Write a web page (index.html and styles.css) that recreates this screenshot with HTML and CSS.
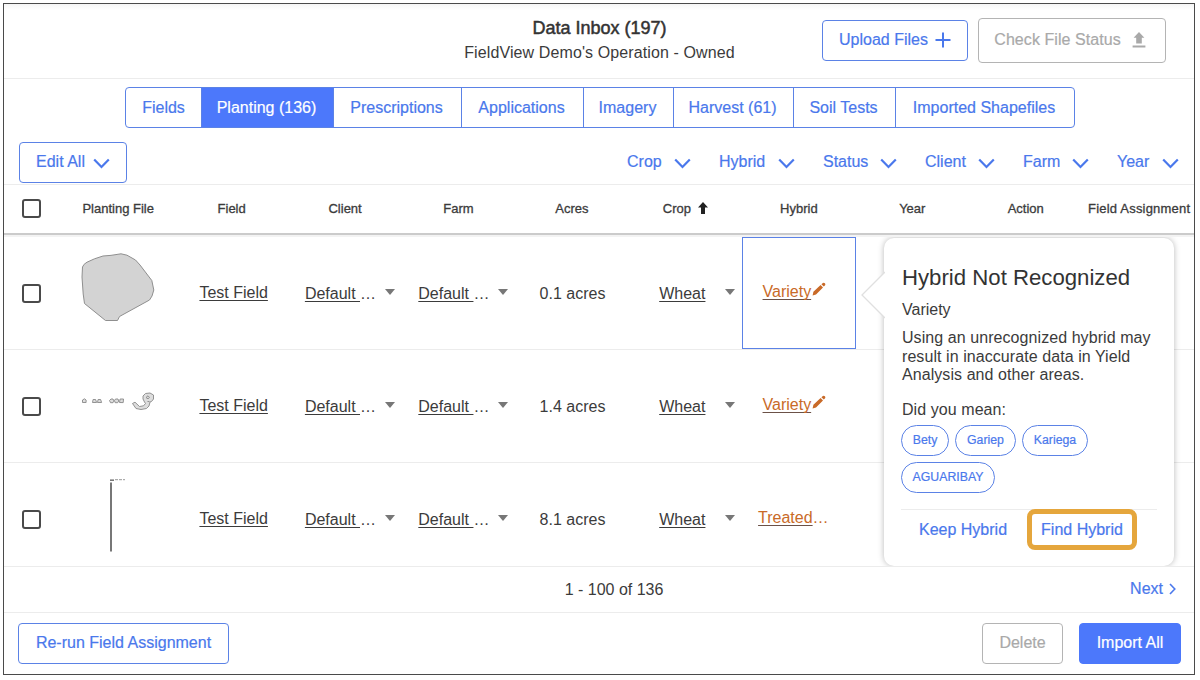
FILE: index.html
```html
<!DOCTYPE html>
<html lang="en">
<head>
<meta charset="utf-8">
<title>Data Inbox</title>
<link rel="stylesheet" href="styles.css">
</head>
<body>
<svg class="defs" width="0" height="0">
  <symbol id="chev" viewBox="0 0 17 11"><path d="M1.2 1.5 8.5 9 15.8 1.5" fill="none" stroke="currentColor" stroke-width="2.2"/></symbol>
  <symbol id="pencil" viewBox="0 0 14 14"><path d="M0.6 13.400 1.400 9.800 8.600 3 11 5.400 4 12.500ZM9.400 2.300 10.900 .9Q11.900 .3 12.900 1.200 13.800 2.200 13.100 3.200L11.800 4.600Z" fill="currentColor"/></symbol>
</svg>
<div class="app">
  <header class="top">
    <div></div>
    <div class="titles">
      <h1 class="title">Data Inbox (197)</h1>
      <p class="subtitle">FieldView Demo's Operation - Owned</p>
    </div>
    <div class="top-actions">
      <button class="btn upload"><span class="t-upload">Upload Files</span><svg width="16" height="16" viewBox="0 0 16 16"><path d="M8 0.5V15.5M0.5 8H15.5" stroke="currentColor" stroke-width="2"/></svg></button>
      <button class="btn muted check"><span class="t-check">Check File Status</span><svg width="14" height="16" viewBox="0 0 14 16"><path d="M7 0 12.4 5.8H9.8V11.6H4.2V5.8H1.6ZM0.6 13.6H13.4V15.4H0.6Z" fill="currentColor"/></svg></button>
    </div>
  </header>
  <nav class="tabs">
    <a class="tab">Fields</a><a class="tab active">Planting (136)</a><a class="tab">Prescriptions</a><a class="tab">Applications</a><a class="tab">Imagery</a><a class="tab">Harvest (61)</a><a class="tab">Soil Tests</a><a class="tab">Imported Shapefiles</a>
  </nav>
  <div class="toolbar">
    <button class="btn edit"><span>Edit All</span><svg width="17" height="11"><use href="#chev"/></svg></button>
    <div class="filters">
      <a class="filter">Crop<svg width="17" height="11"><use href="#chev"/></svg></a>
      <a class="filter">Hybrid<svg width="17" height="11"><use href="#chev"/></svg></a>
      <a class="filter">Status<svg width="17" height="11"><use href="#chev"/></svg></a>
      <a class="filter">Client<svg width="17" height="11"><use href="#chev"/></svg></a>
      <a class="filter">Farm<svg width="17" height="11"><use href="#chev"/></svg></a>
      <a class="filter">Year<svg width="17" height="11"><use href="#chev"/></svg></a>
    </div>
  </div>
  <div class="row head">
    <div class="cell first"><i class="box"></i></div>
    <div class="cell">Planting File</div>
    <div class="cell">Field</div>
    <div class="cell">Client</div>
    <div class="cell">Farm</div>
    <div class="cell">Acres</div>
    <div class="cell sorted">Crop<svg width="10" height="12" viewBox="0 0 10 12"><path d="M5 0 10 5.4H7V12H3V5.4H0Z" fill="currentColor"/></svg></div>
    <div class="cell">Hybrid</div>
    <div class="cell">Year</div>
    <div class="cell">Action</div>
    <div class="cell wide">Field Assignment</div>
  </div>
  <div class="body">
    <div class="row">
      <div class="cell first"><i class="box"></i></div>
      <div class="cell thumb"><svg width="76" height="76" viewBox="80 252 76 76"><path d="M82.5 267Q83.5 264 87 262.2 94 258.5 103 256 110 255.8 121 253.8L127 255.2 135.5 260 140 265 151.8 280.5 153.8 290 152 296 149.5 300 119.5 316.5 117.5 320.5H105.5L84.5 303.5 83.2 294 82 277Z" fill="#d3d3d3" stroke="#8f8f8f"/></svg></div>
      <div class="cell link"><u>Test Field</u></div>
      <div class="cell select"><span><u>Default </u>…</span><b class="caret"></b></div>
      <div class="cell select"><span><u>Default </u>…</span><b class="caret"></b></div>
      <div class="cell acres">0.1 acres</div>
      <div class="cell select crop"><span><u>Wheat</u></span><b class="caret"></b></div>
      <div class="cell hybrid chosen"><span class="warn"><em>Variety</em></span><svg width="14" height="14"><use href="#pencil"/></svg></div>
    </div>
    <div class="row">
      <div class="cell first"><i class="box"></i></div>
      <div class="cell thumb"><svg width="76" height="76" viewBox="80 364 76 76"><g fill="#ddd" stroke="#888" stroke-width=".9"><path d="M82.5 401.500V399l2-1.200 1.600 1.200v2.500zM92.500 401.500l.6-3h2.500l1 3zM97.500 401.500l.6-3h2.500l1 3zM109.500 399.500l1.500-1.500h2l1 2-1 1.700h-2.500zM114.500 399.500l1-1.500h2.500l.7 2-1 1.700h-2.500zM119.500 401.500l.6-3.500h3.400l-.3 3.600z"/><path d="M132.500 402.500 135 401.200 139.500 405.500 143.500 404.800 145.500 402.500 144.500 401 143 398 143 395 145.500 392.500 150 392 153.500 394 153.500 398 151.500 400.500 150 401 149 405 146.500 407.500 141 408.500 136 407.500Z"/><path d="M146 396.500 148 394.800 149.500 396.500 148 397.800ZM147.500 400.500h2" fill="none"/></g></svg></div>
      <div class="cell link"><u>Test Field</u></div>
      <div class="cell select"><span><u>Default </u>…</span><b class="caret"></b></div>
      <div class="cell select"><span><u>Default </u>…</span><b class="caret"></b></div>
      <div class="cell acres">1.4 acres</div>
      <div class="cell select crop"><span><u>Wheat</u></span><b class="caret"></b></div>
      <div class="cell hybrid"><span class="warn"><em>Variety</em></span><svg width="14" height="14"><use href="#pencil"/></svg></div>
    </div>
    <div class="row">
      <div class="cell first"><i class="box"></i></div>
      <div class="cell thumb"><svg width="76" height="76" viewBox="80 476 76 76"><path d="M111 480.500V549.500" stroke="#777" stroke-width="2"/><path d="M110 478.200h4" stroke="#777" stroke-width="1.6"/><path d="M115 477.700h10" stroke="#999" stroke-width="1" stroke-dasharray="3 1"/></svg></div>
      <div class="cell link"><u>Test Field</u></div>
      <div class="cell select"><span><u>Default </u>…</span><b class="caret"></b></div>
      <div class="cell select"><span><u>Default </u>…</span><b class="caret"></b></div>
      <div class="cell acres">8.1 acres</div>
      <div class="cell select crop"><span><u>Wheat</u></span><b class="caret"></b></div>
      <div class="cell hybrid treated"><span class="warn"><em>Treated</em>…</span></div>
    </div>
    <aside class="popover">
      <svg class="arrow" width="24" height="48" viewBox="0 0 24 48"><path d="M24 1 1 24 24 47" fill="#fff" stroke="#e0e0e0" stroke-width="1.3"/></svg>
      <h2 class="pop-title">Hybrid Not Recognized</h2>
      <p class="pop-name">Variety</p>
      <p class="pop-text">Using an unrecognized hybrid may<br>result in inaccurate data in Yield<br>Analysis and other areas.</p>
      <p class="pop-ask">Did you mean:</p>
      <div class="chips">
        <a class="chip c1">Bety</a><a class="chip c2">Gariep</a><a class="chip c3">Kariega</a><a class="chip c4">AGUARIBAY</a>
      </div>
      <div class="pop-actions"><a class="keep">Keep Hybrid</a><a class="find">Find Hybrid</a></div>
    </aside>
  </div>
  <div class="pager">
    <div></div><div class="range">1 - 100 of 136</div>
    <a class="next">Next<svg width="7" height="12" viewBox="0 0 7 12"><path d="M1 1 5.800 6 1 11" fill="none" stroke="currentColor" stroke-width="1.6"/></svg></a>
  </div>
  <footer class="foot">
    <button class="btn rerun">Re-run Field Assignment</button>
    <div class="foot-right">
      <button class="btn muted delete">Delete</button>
      <button class="btn primary">Import All</button>
    </div>
  </footer>
</div>
</body>
</html>
```
FILE: styles.css
```css
* { box-sizing: border-box; margin: 0; padding: 0; }
body { background: #fff; overflow: hidden; font: 16px "Liberation Sans", Arial, sans-serif; color: #3b3b3b; }
svg { display: block; flex: none; }
.defs { position: absolute; }
.app { width: 1192px; height: 672px; margin: 3px; border: 1px solid #4a4a4a; display: flex; flex-direction: column; overflow: hidden; }
.btn { font: inherit; background: #fff; border: 1px solid #5b82e6; border-radius: 4px; color: #4a78ec; display: flex; align-items: center; justify-content: center; height: 41px; padding-bottom: 2px; white-space: nowrap; -webkit-text-stroke: .2px; }
.muted { color: #a9a9a9; border-color: #b4b4b4; }
.primary { background: #4c78fb; border-color: #4c78fb; color: #fff; width: 102px; }

.top { height: 75px; flex: none; display: grid; grid-template-columns: 1fr auto 1fr; border-bottom: 1px solid #ececec; background: linear-gradient(#f5f5f5, #fff 6px); }
.titles { text-align: center; padding: 12px 0 0 1px; }
.title { font-size: 18px; line-height: 25px; font-weight: 400; -webkit-text-stroke: .5px; color: #333; }
.subtitle { font-size: 16px; line-height: 24px; letter-spacing: .11px; }
.top-actions { display: flex; justify-content: flex-end; align-items: center; gap: 10px; padding-right: 28px; height: 73px; }
.upload { width: 146px; gap: 7px; }
.check { width: 188px; height: 45px; gap: 11px; padding-right: 4px; }
.t-check { letter-spacing: .06px; }

.tabs { flex: none; height: 41px; margin: 8px auto 0 121px; display: grid; grid-template-columns: 75px 132px 128px 122px 90px 120px 102px 179px; width: 950px; border: 1px solid #5b82e6; border-radius: 4px; overflow: hidden; }
.tab { display: flex; align-items: center; justify-content: center; color: #4a78ec; border-left: 1px solid #5b82e6; white-space: nowrap; padding-right: 2px; -webkit-text-stroke: .2px; }
.tab:first-child { border-left: 0; padding-right: 0; }
.active { background: #4c78fb; color: #fff; }

.toolbar { flex: none; height: 57px; padding: 14px 15px 0 15px; display: flex; justify-content: space-between; border-bottom: 1px solid #ececec; }
.edit { width: 108px; gap: 8px; padding-bottom: 1px; }
.edit svg { margin-top: 2px; }
.filters { display: grid; grid-template-columns: 64px 76px 74px 70px 66px 62px; gap: 28px; height: 41px; }
.filter { display: flex; align-items: center; justify-content: space-between; color: #4a78ec; padding-bottom: 1px; -webkit-text-stroke: .2px; }
.filter svg { margin-top: 3px; }

.row { display: grid; grid-template-columns: 57.500px repeat(10, 113.450px); height: 113px; border-bottom: 1px solid #ececec; width: 1192px; }
.cell { display: flex; align-items: center; justify-content: center; white-space: nowrap; min-width: 0; }
.box { width: 19px; height: 19px; border: 2px solid #4a4a4a; border-radius: 3px; margin-right: 3px; }
.head { height: 52px; flex: none; border-bottom: 0; padding-bottom: 5px; font-size: 13px; -webkit-text-stroke: .3px; box-shadow: inset 0 -2px #f3f3f3, inset 0 -4px #cbcbcb; }
.head .cell { padding-bottom: 1px; }
.head .first { padding-bottom: 0; }
.sorted svg { margin: 0 0 1px 7px; color: #222; }
.wide { letter-spacing: .2px; }
.body { position: relative; height: 329px; flex: none; overflow: hidden; }
.thumb { padding-bottom: 7px; padding-right: 1px; }
.link { padding-left: 4px; }
.select { justify-content: flex-start; padding-left: 16.500px; }
.select span { width: 80px; padding-top: 1px; white-space: pre; }
.crop { padding-left: 30.500px; }
.crop span { width: 66px; }
.caret { border: 5.500px solid transparent; border-top: 6px solid #777; border-bottom: 0; margin-top: -3px; }
u, em { font-style: normal; text-decoration: underline; text-decoration-thickness: 1px; text-underline-offset: 2px; text-decoration-skip-ink: none; }
.acres { padding: 1px 0 0 1px; }
.hybrid { color: #c96a28; padding: 0 9px 3px 0; }
.hybrid em { text-decoration-color: #6b5147; }
.hybrid svg { margin: -5px 0 0 1px; }
.chosen { border: 1px solid #5b82e6; padding-right: 9px; }
.treated { padding-right: 11px; }

.popover { position: absolute; left: 880px; top: 1px; width: 290px; height: 328px; background: #fff; border-radius: 10px; box-shadow: 0 0 6px rgba(0,0,0,.28); padding: 26px 17px 0 18px; }
.arrow { position: absolute; left: -23px; top: 33px; }
.pop-title { font-size: 22.200px; line-height: 28px; font-weight: 400; color: #333; }
.pop-name { line-height: 20px; margin-top: 8px; }
.pop-text { line-height: 18.700px; margin-top: 9px; white-space: nowrap; letter-spacing: .07px; }
.pop-ask { line-height: 20px; margin-top: 15px; letter-spacing: .07px; }
.chips { display: flex; flex-wrap: wrap; gap: 6px; margin: 5px 0 0 -1px; }
.chip { height: 31px; border: 1px solid #5b82e6; border-radius: 16px; color: #4a78ec; font-size: 12.300px; display: flex; align-items: center; justify-content: center; padding-bottom: 2px; -webkit-text-stroke: .2px; }
.c1 { width: 48px; } .c2 { width: 61px; } .c3 { width: 66px; } .c4 { width: 94px; }
.pop-actions { display: flex; align-items: flex-start; justify-content: space-between; border-top: 1px solid #ececec; margin: 16px 0 0 -1px; color: #4a78ec; -webkit-text-stroke: .2px; }
.keep { padding: 10px 0 0 18px; line-height: 20px; }
.find { width: 110px; height: 41px; border: 5px solid #e5a63c; border-radius: 8px; background: #fff; display: flex; align-items: center; justify-content: center; margin: -1px 20px 0 0; }

.pager { flex: none; height: 46px; border-top: 1px solid #ececec; display: grid; grid-template-columns: 1fr auto 1fr; align-items: center; background: #fff; padding: 0 18px; }
.range { margin-left: 30px; }
.next { color: #4a78ec; display: flex; align-items: center; justify-content: flex-end; gap: 6px; padding-bottom: 1px; -webkit-text-stroke: .2px; }
.foot { flex: 1; border-top: 1px solid #ececec; display: flex; justify-content: space-between; align-items: flex-start; padding: 10px 13px 0 14px; }
.rerun { width: 211px; }
.foot-right { display: flex; gap: 16px; }
.delete { width: 81px; }
```
